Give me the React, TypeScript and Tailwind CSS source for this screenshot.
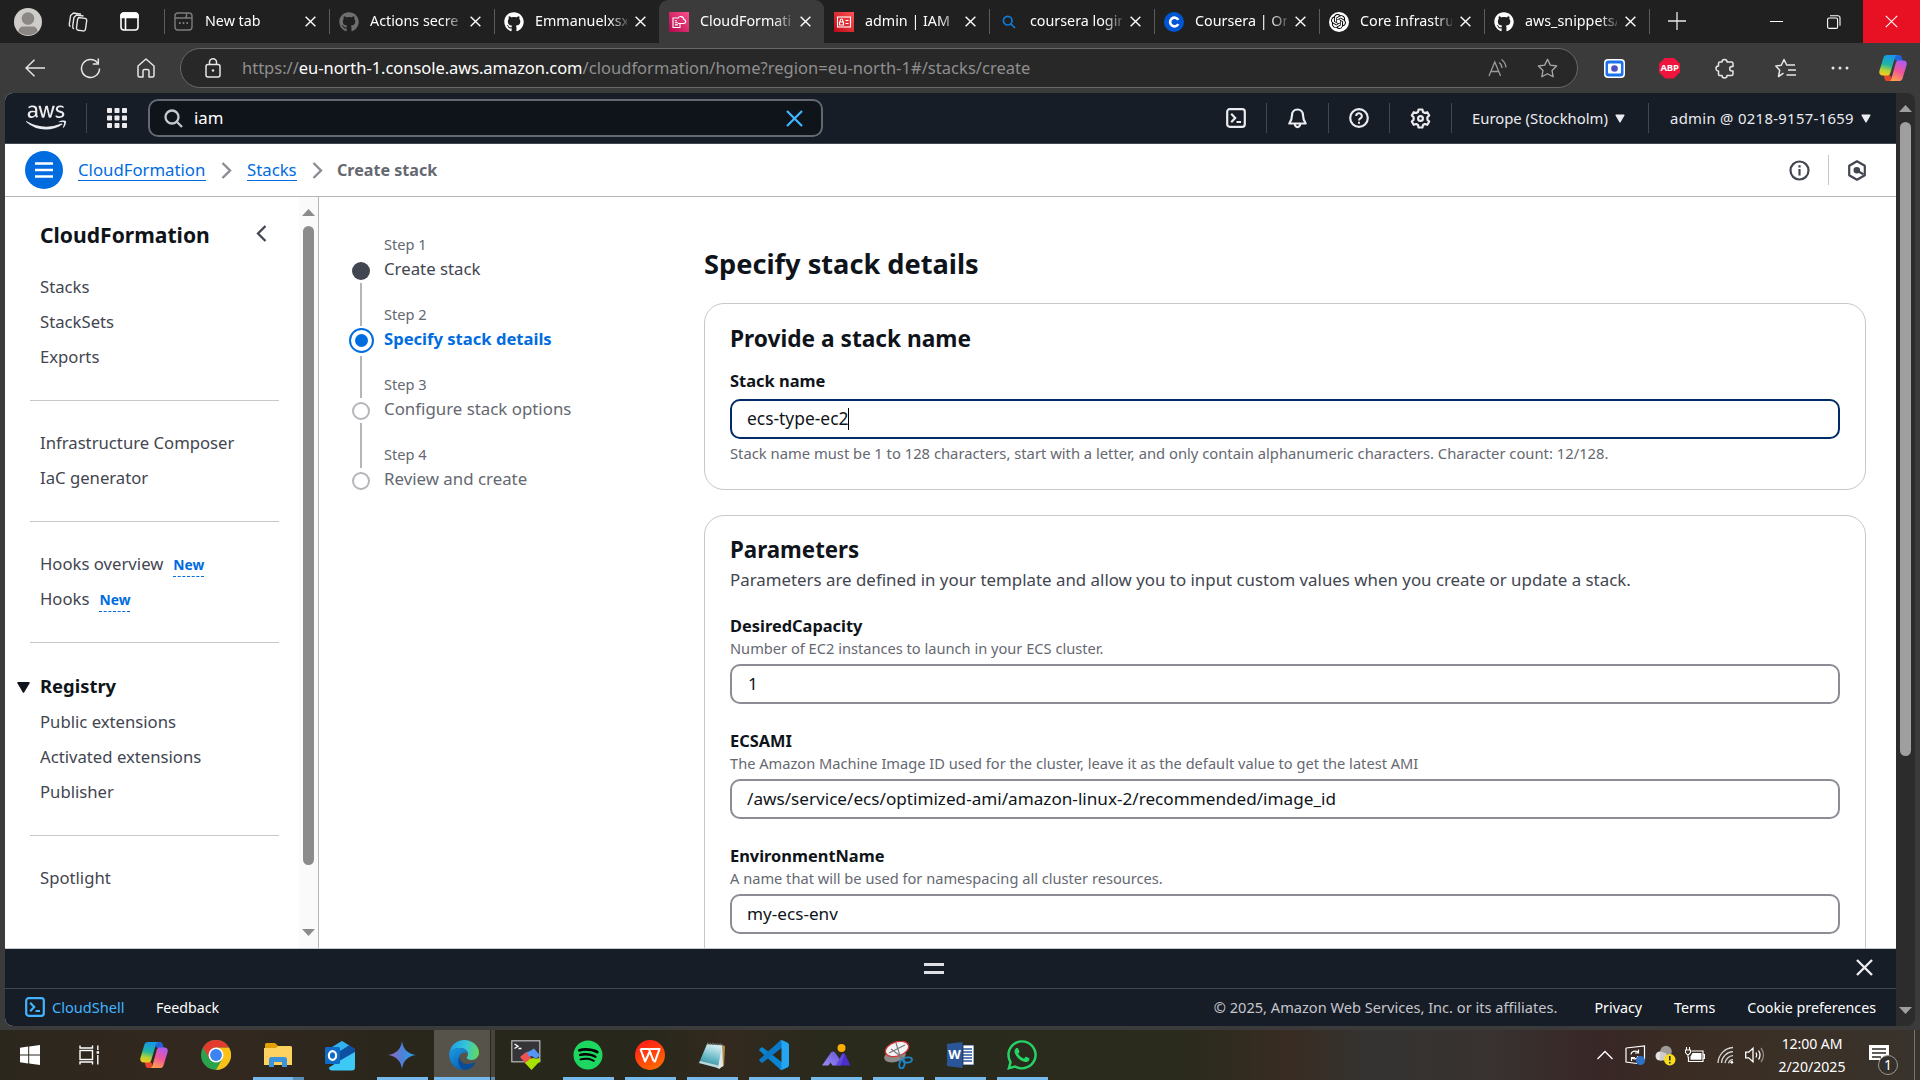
import React from 'react';
import { FaGithub, FaAws, FaSpotify, FaWhatsapp } from 'react-icons/fa';
import { SiOpenai } from 'react-icons/si';

type Kids = { children?: React.ReactNode; className?: string };

/* ---------- browser chrome icons ---------- */

const X = ({ size, w = 1.4, className = '' }: { size: number; w?: number; className?: string }) => (
  <svg width={size} height={size} viewBox="0 0 12 12" className={className} fill="none" stroke="currentColor" strokeWidth={w}>
    <path d="M.7.7l10.6 10.6M11.3.7L.7 11.3" />
  </svg>
);

const Avatar = () => (
  <svg width="28" height="28" viewBox="0 0 28 28">
    <circle cx="14" cy="14" r="14" fill="#cfcdca" />
    <circle cx="14" cy="10.5" r="6.3" fill="#8b8784" />
    <path d="M4.5 23.5c0-4 3-5 5-5h9c2 0 5 1 5 5a14 14 0 0 1-19 0z" fill="#8b8784" />
  </svg>
);

const Workspaces = () => (
  <svg width="21" height="22" viewBox="0 0 21 22" fill="none" stroke="#e6e6e6" strokeWidth="1.4" strokeLinejoin="round">
    <path d="M11.5 6.500l6.500.9a2 2 0 0 1 1.700 2.300l-1.200 8.500a2 2 0 0 1-2.300 1.700l-5-.7a2 2 0 0 1-1.700-2.300l1.100-8.500z" />
    <path d="M7 17.800c-1-.4-1.500-1.200-1.300-2.400L6.900 6.500 9.500 4l7 1" />
    <path d="M3.500 15.500c-1-.4-1.400-1.200-1.200-2.400l1.300-8.600L6.500 2l7.500 1.200" />
  </svg>
);

const TabActions = () => (
  <svg width="19" height="19" viewBox="0 0 19 19" fill="none" stroke="#fff" strokeWidth="1.6">
    <rect x="1" y="1" width="17" height="17" rx="3" />
    <path d="M1 4a3 3 0 0 1 3-3h11a3 3 0 0 1 3 3v1.500H1z" fill="#fff" />
    <path d="M5.500 5v13" />
  </svg>
);

const NewTabIcon = () => (
  <svg width="19" height="19" viewBox="0 0 19 19" fill="none" stroke="#7c7c7c" strokeWidth="1.4">
    <rect x="1" y="1" width="17" height="17" rx="3" />
    <path d="M1 6h10l1.500-1.500V1M11 6h7" />
    <path d="M5 11h1.600M8.700 11h1.600M12.400 11H14" strokeWidth="1.8" />
  </svg>
);

const CfnFav = () => (
  <svg width="20" height="20" viewBox="0 0 20 20" fill="none" stroke="#fff" strokeWidth="1.1">
    <defs>
      <linearGradient id="cfn" x1="0" y1="1" x2="1" y2="0">
        <stop stopColor="#b0084d" />
        <stop offset="1" stopColor="#ff4f8b" />
      </linearGradient>
    </defs>
    <rect width="20" height="20" fill="url(#cfn)" stroke="none" />
    <path d="M8.500 6H4v9.500h7v-3.500M5.800 8.700h2.200M5.800 10.700h3.200M5.800 12.900h3.200" />
    <path d="M9 11.500h5.500a2 2 0 0 0 .3-4 3.200 3.200 0 0 0-6.200-.8" />
  </svg>
);

const IamFav = () => (
  <svg width="20" height="20" viewBox="0 0 20 20" fill="none" stroke="#fff" strokeWidth="1.1">
    <defs>
      <linearGradient id="iam" x1="0" y1="1" x2="1" y2="0">
        <stop stopColor="#bd0816" />
        <stop offset="1" stopColor="#ff5252" />
      </linearGradient>
    </defs>
    <rect width="20" height="20" fill="url(#iam)" stroke="none" />
    <rect x="3.500" y="5" width="13" height="10" />
    <path d="M5.500 10h4v3h-4zM6.300 10V8.200a1.200 1.200 0 0 1 2.400 0V10M11.500 8.500h3M11.500 11.500h3" />
  </svg>
);

const BlueSearch = () => (
  <svg width="20" height="20" viewBox="0 0 20 20" fill="none" stroke="#0f7ad8" strokeWidth="1.7">
    <circle cx="8.700" cy="8.700" r="4.300" />
    <path d="M11.800 11.800l4.200 4.200" />
  </svg>
);

const CourseraFav = () => (
  <span className="flex size-5 items-center justify-center rounded-full bg-[#0056d2]">
    <svg width="12" height="12" viewBox="0 0 12 12" fill="none" stroke="#fff" strokeWidth="2.6">
      <path d="M10.300 3.800A4.400 4.400 0 1 0 10.300 8.200" />
    </svg>
  </span>
);

const OpenAiFav = () => (
  <span className="flex size-5 items-center justify-center rounded-full bg-white text-black">
    <SiOpenai size={15} />
  </span>
);

type TabProps = { icon: React.ReactNode; label: string; active?: boolean; line?: boolean };

const Tab = ({ icon, label, active, line = true }: TabProps) => (
  <div className={`flex h-[43px] w-[165px] shrink-0 items-center ${active ? 'rounded-t-[9px] bg-[#3b3b3b]' : ''}`}>
    <span className={`-mt-px h-[25px] w-px ${line ? 'bg-[#5c5c5c]' : ''}`} />
    <span className="ml-2 flex w-[21px] justify-center">{icon}</span>
    <span className="ml-[11px] w-[92px] whitespace-nowrap pb-[2px] text-[14.3px] text-white [mask-image:linear-gradient(to_right,black_74px,transparent_97px)]">
      {label}
    </span>
    <X size={11} w={1.5} className="ml-[8px] text-white" />
  </div>
);

const TabBar = () => (
  <div className="flex h-[43px] bg-[#202020]">
    <div className="flex w-[164px] shrink-0 items-center pl-[14px]">
      <Avatar />
      <span className="ml-[25px]">
        <Workspaces />
      </span>
      <span className="ml-[32px]">
        <TabActions />
      </span>
    </div>
    <Tab icon={<NewTabIcon />} label="New tab" />
    <Tab icon={<FaGithub size={20} className="text-[#6f6f6f]" />} label="Actions secre" />
    <Tab icon={<FaGithub size={20} className="text-white" />} label="Emmanuelxsx" />
    <Tab icon={<CfnFav />} label="CloudFormati" active line={false} />
    <Tab icon={<IamFav />} label="admin | IAM |" line={false} />
    <Tab icon={<BlueSearch />} label="coursera login" />
    <Tab icon={<CourseraFav />} label="Coursera | On" />
    <Tab icon={<OpenAiFav />} label="Core Infrastru" />
    <Tab icon={<FaGithub size={20} className="text-white" />} label="aws_snippets/" />
    <div className="flex w-[99px] items-center">
      <span className="-mt-px h-[25px] w-px bg-[#5c5c5c]" />
      <svg width="18" height="18" viewBox="0 0 18 18" className="-mt-px ml-[18px]" stroke="#e8e8e8" strokeWidth="1.3">
        <path d="M9 0v18M0 9h18" />
      </svg>
    </div>
    <div className="flex w-[57px] items-center justify-center">
      <span className="h-px w-[13px] bg-white" />
    </div>
    <div className="flex w-[58px] items-center justify-center">
      <svg width="14" height="14" viewBox="0 0 14 14" fill="none" stroke="#fff" strokeWidth="1.1">
        <rect x=".6" y="3" width="10" height="10.400" rx="1.500" />
        <path d="M3 .8h8a2 2 0 0 1 2 2v8" />
      </svg>
    </div>
    <div className="flex flex-1 items-center justify-center bg-[#e81123]">
      <X size={13} w={1} className="text-white" />
    </div>
  </div>
);

const Copilot = ({ id, size }: { id: string; size: number }) => (
  <svg width={size} height={size} viewBox="0 0 30 30">
    <defs>
      <linearGradient id={id + 'a'} x1=".4" y1="0" x2=".2" y2="1">
        <stop stopColor="#1797e8" />
        <stop offset=".45" stopColor="#22b5a2" />
        <stop offset=".75" stopColor="#b7d334" />
        <stop offset="1" stopColor="#ffc81e" />
      </linearGradient>
      <linearGradient id={id + 'b'} x1=".7" y1="0" x2=".3" y2="1">
        <stop stopColor="#b05af0" />
        <stop offset=".5" stopColor="#f0569a" />
        <stop offset="1" stopColor="#ffa04a" />
      </linearGradient>
    </defs>
    <path d="M17 1h4.500c1.500 0 2.300 1 2.700 2.300l1.300 4.200h-5.500c-2 0-2.800-1-3.300-2.800z" fill="#2463d8" />
    <path d="M13 29H8.800c-1.500 0-2.400-1-2.800-2.300L5 22.500h5c2 0 2.800 1 3.200 2.800z" fill="#e8452f" />
    <path d="M8.500 1H20c-1.500 0-2.300 1-2.800 2.500L12 20.500c-.5 1.500-1.500 2.500-3 2.500H4c-3 0-4.300-2-3.500-5L4.700 4C5.300 2 6.500 1 8.500 1z" fill={`url(#${id}a)`} />
    <path d="M21.500 29H10.500c1.500 0 2.300-1 2.800-2.500L18 9.500C18.500 8 19.500 7 21 7h5c3 0 4.300 2 3.500 5l-4.200 14c-.6 2-1.800 3-3.800 3z" fill={`url(#${id}b)`} />
  </svg>
);

const Cell = ({ children, className = '' }: Kids) => (
  <span className={`flex shrink-0 items-center justify-center ${className}`}>{children}</span>
);

const Toolbar = () => (
  <div className="flex h-[50px] items-center bg-[#3b3b3b] text-[#e6e6e6]">
    <Cell className="ml-[7px] w-[55px]">
      <svg width="20" height="18" viewBox="0 0 20 18" fill="none" stroke="currentColor" strokeWidth="1.5">
        <path d="M20 9H1M9.500.8L1 9l8.500 8.200" />
      </svg>
    </Cell>
    <Cell className="w-[57px]">
      <svg width="21" height="21" viewBox="0 0 21 21" fill="none" stroke="currentColor" strokeWidth="1.5">
        <path d="M17.800 5.200A9 9 0 1 0 19.500 10.500" />
        <path d="M18.300.5V6h-5.500" />
      </svg>
    </Cell>
    <Cell className="w-[54px]">
      <svg width="18" height="20" viewBox="0 0 18 20" fill="none" stroke="currentColor" strokeWidth="1.5" strokeLinejoin="round">
        <path d="M1 8l8-7 8 7v9.500a1.500 1.500 0 0 1-1.500 1.500H12v-6a1.500 1.500 0 0 0-1.500-1.500h-3A1.500 1.500 0 0 0 6 13v6H2.500A1.500 1.500 0 0 1 1 17.500z" />
      </svg>
    </Cell>
    <div className="ml-[7px] flex h-10 w-[1398px] shrink-0 items-center rounded-full border border-[#686868] bg-[#282828]">
      <svg width="16" height="20" viewBox="0 0 16 20" fill="none" stroke="#e6e6e6" strokeWidth="1.5" className="ml-[24px]">
        <rect x="1" y="6.500" width="14" height="12.500" rx="2" />
        <path d="M4.500 6.500V4.300a3.500 3.500 0 0 1 7 0v2.200" />
        <circle cx="8" cy="12.500" r="1.200" fill="#e6e6e6" stroke="none" />
      </svg>
      <span className="ml-[21px] text-[16.5px] whitespace-nowrap text-[#8f8f8f]">
        https://<span className="tracking-[-0.05px] text-white">eu-north-1.console.aws.amazon.com</span>
        <span className="tracking-[0.04px]">/cloudformation/home?region=eu-north-1#/stacks/create</span>
      </span>
      <span className="flex-1" />
      <svg width="20" height="18" viewBox="0 0 20 18" fill="none" stroke="#9a9a9a" strokeWidth="1.3">
        <path d="M1 17L6.800 3l5.800 14M3 12.500h7.700M11 3.500a7 7 0 0 1 3 5.500M13.500.5a11 11 0 0 1 4.500 8" />
      </svg>
      <svg width="21" height="20" viewBox="0 0 24 23" fill="none" stroke="#a8a8a8" strokeWidth="1.5" strokeLinejoin="round" className="mr-[19px] ml-[29px]">
        <path d="M12 1.500l3.200 6.700 7.300 1-5.300 5.100 1.300 7.300-6.500-3.500-6.500 3.500 1.300-7.300L1.500 9.200l7.300-1z" />
      </svg>
    </div>
    <Cell className="ml-[9px] w-[55px]">
      <svg width="21" height="19" viewBox="0 0 21 19">
        <rect width="21" height="19" rx="4" fill="#fff" />
        <rect x="1.500" y="1.500" width="18" height="16" rx="3" fill="#1a73e8" />
        <rect x="4" y="4.500" width="13" height="10" rx="1" fill="#fff" />
        <circle cx="10.500" cy="9.500" r="3.300" fill="#4a4fc4" />
      </svg>
    </Cell>
    <Cell className="w-[55px]">
      <span className="flex size-[21px] items-center justify-center bg-[#f0143c] text-[9.5px] leading-none font-bold tracking-[-0.2px] text-white [clip-path:polygon(30%_0,70%_0,100%_30%,100%_70%,70%_100%,30%_100%,0_70%,0_30%)]">
        ABP
      </span>
    </Cell>
    <Cell className="w-[55px]">
      <svg width="20" height="21" viewBox="0 0 20 21" fill="none" stroke="currentColor" strokeWidth="1.5" strokeLinejoin="round">
        <path d="M7 4a2.500 2.500 0 0 1 5 0h4.500a1.500 1.500 0 0 1 1.500 1.500V8.500h-1a2.300 2.300 0 0 0 0 4.600h1v3a1.500 1.500 0 0 1-1.500 1.500H12a2.500 2.500 0 0 1-5 0H5A1.500 1.500 0 0 1 3.500 16v-3a2.500 2.500 0 0 1 0-5V5.500A1.500 1.500 0 0 1 5 4z" />
      </svg>
    </Cell>
    <span className="ml-[3px] h-5 w-px bg-[#6b6b6b]" />
    <Cell className="w-[60px]">
      <svg width="21" height="20" viewBox="0 0 21 20" fill="none" stroke="currentColor" strokeWidth="1.5" strokeLinejoin="round">
        <path d="M8.500 15.200L3.500 18.500l1.200-6.300L.8 8.100l5.500-.8L9 1.500l2.700 5.500H20M13 12h8M11.500 17H21" />
      </svg>
    </Cell>
    <Cell className="w-[50px]">
      <svg width="18" height="4" viewBox="0 0 18 4" fill="currentColor">
        <circle cx="2" cy="2" r="1.500" />
        <circle cx="9" cy="2" r="1.500" />
        <circle cx="16" cy="2" r="1.500" />
      </svg>
    </Cell>
    <Cell className="w-[56px]">
      <Copilot id="cpt" size={28} />
    </Cell>
  </div>
);

/* ---------- AWS console ---------- */

const Triangle = ({ className = '' }: { className?: string }) => (
  <svg width="10" height="9" viewBox="0 0 11 10" className={className} fill="currentColor" stroke="currentColor" strokeLinejoin="round" strokeWidth="1.500">
    <path d="M1.200 1.200h8.600L5.500 8.700z" />
  </svg>
);

const ShellIcon = () => (
  <svg width="20" height="20" viewBox="0 0 20 20" fill="none" stroke="currentColor" strokeWidth="2.2">
    <rect x="1.200" y="1.200" width="17.600" height="17.600" rx="2.500" />
    <path d="M5.200 5.800L9.200 10l-4 4.200M10.500 14h4.500" />
  </svg>
);

const Sep = () => <span className="h-[30px] w-px bg-[#424650]" />;

const Header = () => (
  <div className="flex h-[51px] items-center border-b border-[#424650] bg-[#161d26] text-[#ebebf0]">
    <FaAws className="mb-px ml-[21px] h-[39px] w-[40px] shrink-0" />
    <span className="ml-[20px] h-[30px] w-px bg-[#424650]" />
    <svg width="20" height="20" viewBox="0 0 20 20" className="ml-[20px] shrink-0" fill="currentColor">
      {[0, 7.5, 15].map((y) => [0, 7.5, 15].map((x) => <rect key={`${x}-${y}`} x={x} y={y} width="5" height="5" rx=".8" />))}
    </svg>
    <div className="ml-[21px] flex h-[38px] w-[675px] shrink-0 items-center rounded-[10px] border-2 border-[#656871] bg-[#0f141a]">
      <svg width="19" height="19" viewBox="0 0 19 19" className="ml-[14px] shrink-0" fill="none" stroke="#c6c6cd" strokeWidth="2.3">
        <circle cx="8" cy="8" r="6.500" />
        <path d="M12.500 12.500l5.500 5.500" />
      </svg>
      <span className="ml-[11px] flex-1 text-[16.8px] text-white">iam</span>
      <X size={17} w={1.6} className="mr-[18px] text-[#42b4ff]" />
    </div>
    <Cell className="ml-[382px] w-[61px]">
      <ShellIcon />
    </Cell>
    <Sep />
    <Cell className="w-[60px]">
      <svg width="19" height="21" viewBox="0 0 19 21" fill="none" stroke="currentColor" strokeWidth="2.2" strokeLinejoin="round">
        <path d="M9.500 1.500c-3.500 0-5.500 2.500-5.500 5.700 0 4.300-1 5.800-2.700 8.300h16.400C16 13 15 11.500 15 7.200c0-3.200-2-5.700-5.500-5.700zM6.800 15.700a2.700 3.500 0 0 0 5.400 0" />
      </svg>
    </Cell>
    <span className="ml-px h-[30px] w-px bg-[#424650]" />
    <Cell className="w-[60px]">
      <svg width="20" height="20" viewBox="0 0 20 20" fill="none" stroke="currentColor" strokeWidth="2.2">
        <circle cx="10" cy="10" r="8.800" />
        <path d="M7.200 8a2.800 2.800 0 1 1 4 2.500c-.8.400-1.200.8-1.200 2M10 13.800v2" strokeWidth="2" />
      </svg>
    </Cell>
    <Sep />
    <Cell className="w-[61px]">
      <svg width="21" height="21" viewBox="0 0 21 21" fill="none" stroke="currentColor" strokeWidth="2.2" strokeLinejoin="round">
        <path d="M8.600 1.500h3.800l.6 2.500 1.800 1 2.500-.8 1.900 3.300-1.800 1.800v2.400l1.800 1.800-1.900 3.300-2.500-.8-1.800 1-.6 2.500H8.600L8 17l-1.800-1-2.500.8-1.900-3.300 1.800-1.800V9.300L1.800 7.500l1.900-3.300 2.500.8L8 4z" />
        <circle cx="10.500" cy="10.500" r="2.400" />
      </svg>
    </Cell>
    <Sep />
    <span className="ml-[20px] w-[136px] text-[14.85px] whitespace-nowrap">Europe (Stockholm)</span>
    <Triangle className="ml-[7px]" />
    <span className="ml-[23px] h-[30px] w-px bg-[#424650]" />
    <span className="ml-[21px] w-[184px] text-[14.85px] tracking-[0.32px] whitespace-nowrap">admin @ 0218-9157-1659</span>
    <Triangle className="ml-[7px]" />
  </div>
);

const Chevron = () => (
  <svg width="11" height="17" viewBox="0 0 11 17" fill="none" stroke="#8c8c94" strokeWidth="2.4">
    <path d="M1.500 1l7.500 7.500L1.500 16" />
  </svg>
);

const Breadcrumbs = () => (
  <div className="flex h-[53px] shrink-0 items-center border-b border-[#b4b4bb] bg-white text-[16.75px] whitespace-nowrap">
    <span className="ml-[20px] flex size-[38px] shrink-0 items-center justify-center rounded-full bg-[#006ce0]">
      <svg width="18" height="16" viewBox="0 0 18 16" stroke="#fff" strokeWidth="2.3">
        <path d="M0 1.500h18M0 8h18M0 14.500h18" />
      </svg>
    </span>
    <span className="ml-[15px] h-[22px] w-[128px] border-b border-[#006ce0] leading-[22px] text-[#006ce0]">CloudFormation</span>
    <span className="mx-[15px] flex w-[11px]">
      <Chevron />
    </span>
    <span className="h-[22px] w-[50px] border-b border-[#006ce0] leading-[22px] text-[#006ce0]">Stacks</span>
    <span className="mr-[14px] ml-[15px] flex w-[11px]">
      <Chevron />
    </span>
    <span className="flex-1 text-[16.1px] font-bold text-[#656871]">Create stack</span>
    <svg width="21" height="21" viewBox="0 0 21 21" fill="none" stroke="#424650" strokeWidth="2.2">
      <circle cx="10.500" cy="10.500" r="9" />
      <path d="M10.500 9v6.500M10.500 5.300v2.200" />
    </svg>
    <span className="mx-[18px] h-[30px] w-px bg-[#c6c6cd]" />
    <svg width="20" height="21" viewBox="0 0 20 21" fill="none" stroke="#424650" strokeWidth="2.2" strokeLinejoin="round" className="mr-[29px]">
      <path d="M10 1.300l7.800 4.500v9.400L10 19.700l-7.800-4.500V5.800z" />
      <circle cx="9.800" cy="10.300" r="2.200" fill="#424650" />
      <path d="M10.500 11l6 3.200" />
    </svg>
  </div>
);

const Item = ({ children, className = '' }: Kids) => (
  <div className={`flex h-[35px] items-center pb-[3px] text-[16.7px] whitespace-nowrap text-[#424650] ${className}`}>{children}</div>
);

const Rule = () => <div className="mt-[24px] mb-[26px] -ml-[10px] h-px w-[249px] bg-[#c6c6cd]" />;

const NewBadge = () => (
  <span className="mt-[3px] ml-[10px] h-[22px] border-b border-dashed border-[#006ce0] text-[13.8px] leading-[20px] font-bold text-[#006ce0]">New</span>
);

const Arrow = ({ down, fill }: { down?: boolean; fill: string }) => (
  <svg width="13" height="7" viewBox="0 0 13 7" fill={fill} className="shrink-0">
    <path d={down ? 'M0 0h13L6.500 7z' : 'M0 7h13L6.500 0z'} />
  </svg>
);

const Sidebar = () => (
  <div className="flex w-[314px] shrink-0 border-r border-[#b4b4bb]">
    <div className="w-[294px] pl-[35px]">
      <div className="mt-[18px] flex h-[40px] items-center text-[21.1px] font-bold text-[#0f141a]">
        <span className="w-[171px]">CloudFormation</span>
        <svg width="11" height="17" viewBox="0 0 11 17" fill="none" stroke="#424650" strokeWidth="2.3" className="mb-[3px] ml-[45px]">
          <path d="M9.500 1L2 8.500 9.500 16" />
        </svg>
      </div>
      <div className="h-[16px]" />
      <Item>Stacks</Item>
      <Item>StackSets</Item>
      <Item>Exports</Item>
      <Rule />
      <Item>Infrastructure Composer</Item>
      <Item>IaC generator</Item>
      <Rule />
      <Item>
        Hooks overview
        <NewBadge />
      </Item>
      <Item>
        Hooks
        <NewBadge />
      </Item>
      <Rule />
      <div className="-ml-[23px] flex h-[37px] items-center pb-[3px] text-[18.4px] font-bold text-[#0f141a]">
        <svg width="13" height="11" viewBox="0 0 13 11" fill="currentColor" className="mt-[3px] mr-[10px]">
          <path d="M1 0h11q1 .3.600 1.300L7.300 10.300q-.8 1-1.600 0L.4 1.300Q0 .3 1 0z" />
        </svg>
        Registry
      </div>
      <Item>Public extensions</Item>
      <Item>Activated extensions</Item>
      <Item>Publisher</Item>
      <Rule />
      <Item>Spotlight</Item>
    </div>
    <div className="flex flex-1 flex-col items-center bg-[#fafafa] pt-[12px]">
      <Arrow fill="#8b8b8b" />
      <div className="mt-[10px] h-[639px] w-[11px] rounded-full bg-[#8b8b8b]" />
      <div className="flex-1" />
      <span className="mb-[12px]">
        <Arrow down fill="#8b8b8b" />
      </span>
    </div>
  </div>
);

type StepProps = { n: number; label: string; state: 'done' | 'active' | 'todo'; line?: string };

const Step = ({ n, label, state, line }: StepProps) => (
  <div className="flex h-[70px]">
    <div className="flex w-[26px] flex-col items-center">
      <div className="flex h-[26px] items-center">
        {state === 'done' && <span className="size-[18px] rounded-full bg-[#424650]" />}
        {state === 'active' && (
          <span className="flex size-[25px] items-center justify-center rounded-full border-[2.5px] border-[#006ce0]">
            <span className="size-[13px] rounded-full bg-[#006ce0]" />
          </span>
        )}
        {state === 'todo' && <span className="size-[18px] rounded-full border-[2.5px] border-[#b4b4bb]" />}
      </div>
      {line && <span className={`w-[2px] bg-[#b4b4bb] ${line}`} />}
    </div>
    <div className="-mt-[25px] ml-[10px]">
      <div className="text-[14.6px] leading-[22px] text-[#656871]">Step {n}</div>
      <div
        className={`pt-px leading-[26px] whitespace-nowrap ${
          state === 'done' ? 'text-[16.8px] text-[#424650]' : state === 'active' ? 'text-[16.6px] font-bold text-[#006ce0]' : 'text-[16.85px] text-[#656871]'
        }`}
      >
        {label}
      </div>
    </div>
  </div>
);

const Field = ({ label, help, value, one }: { label: string; help: string; value: string; one?: boolean }) => (
  <div className="h-[115px]">
    <div className="text-[16.4px] leading-[25px] font-bold text-[#0f141a]">{label}</div>
    <div className="text-[14.63px] leading-[20px] text-[#656871]">{help}</div>
    <div className={`mt-[6px] flex h-10 items-center rounded-[10px] border-[2.5px] border-[#8c8c94] pb-px text-[17.15px] text-[#0f141a] ${one ? 'pl-[16px]' : 'pl-[15px]'}`}>{value}</div>
  </div>
);

const Main = () => (
  <div className="flex flex-1 overflow-hidden bg-white">
    <div className="w-[385px] shrink-0 pt-[61px] pl-[29px]">
      <Step n={1} label="Create stack" state="done" line="-mt-px h-[43px]" />
      <Step n={2} label="Specify stack details" state="active" line="mt-[2px] h-[43px]" />
      <Step n={3} label="Configure stack options" state="todo" line="-mt-px h-[46px]" />
      <Step n={4} label="Review and create" state="todo" />
    </div>
    <div className="w-[1162px] shrink-0">
      <h1 className="mt-[47px] mb-[19px] text-[27.2px] leading-[40px] font-bold text-[#0f141a]">Specify stack details</h1>
      <section className="h-[187px] rounded-[20px] border border-[#c6c6cd] px-[25px]">
        <h2 className="mt-[19px] text-[22.7px] leading-[32px] font-bold text-[#0f141a]">Provide a stack name</h2>
        <div className="mt-[13px] text-[16.45px] leading-[25px] font-bold text-[#0f141a]">Stack name</div>
        <div className="mt-[6px] flex h-10 items-center rounded-[10px] border-[2.5px] border-[#002b66] pl-[15px] text-[#0f141a]">
          <span className="pb-px text-[17.4px]">ecs-type-ec2</span>
          <span className="h-[22px] w-px bg-black" />
        </div>
        <div className="mt-[4px] text-[14.77px] leading-[20px] whitespace-nowrap text-[#656871]">
          Stack name must be 1 to 128 characters, start with a letter, and only contain alphanumeric characters. Character count: 12/128.
        </div>
      </section>
      <section className="mt-[25px] h-[500px] rounded-[20px] border border-[#c6c6cd] px-[25px]">
        <h2 className="mt-[18px] text-[22.3px] leading-[32px] font-bold text-[#0f141a]">Parameters</h2>
        <div className="mt-px mb-[20px] text-[16.86px] leading-[26px] whitespace-nowrap text-[#424650]">
          Parameters are defined in your template and allow you to input custom values when you create or update a stack.
        </div>
        <Field label="DesiredCapacity" help="Number of EC2 instances to launch in your ECS cluster." value="1" one />
        <Field
          label="ECSAMI"
          help="The Amazon Machine Image ID used for the cluster, leave it as the default value to get the latest AMI"
          value="/aws/service/ecs/optimized-ami/amazon-linux-2/recommended/image_id"
        />
        <Field label="EnvironmentName" help="A name that will be used for namespacing all cluster resources." value="my-ecs-env" />
      </section>
    </div>
  </div>
);

const Footer = () => (
  <div className="shrink-0 bg-[#161d26] text-[14.6px] whitespace-nowrap text-[#ebebf0]">
    <div className="flex h-[41px] items-center border-t border-b border-t-[#c6c6cd] border-b-[#424650]">
      <div className="ml-[919px] h-[11px] w-[20px] border-y-[3px] border-[#dedee3]" />
      <span className="flex-1" />
      <X size={17} w={1.7} className="mr-[23px] mb-[2px]" />
    </div>
    <div className="flex h-[37px] items-center">
      <span className="mb-px ml-[20px] text-[#42b4ff]">
        <ShellIcon />
      </span>
      <span className="ml-[7px] w-[74px] text-[#42b4ff]">CloudShell</span>
      <span className="ml-[30px] text-[14.2px] text-white">Feedback</span>
      <span className="flex-1" />
      <span className="text-[#c6c6cd]">© 2025, Amazon Web Services, Inc. or its affiliates.</span>
      <span className="ml-[37px] text-[14.3px] text-white">Privacy</span>
      <span className="ml-[32px] text-[14.3px] text-white">Terms</span>
      <span className="mr-[20px] ml-[32px] text-[14.25px] text-white">Cookie preferences</span>
    </div>
  </div>
);

/* ---------- taskbar ---------- */

const Windows = () => (
  <svg width="20" height="20" viewBox="0 0 20 20" fill="#fff">
    <path d="M0 2.800l8.200-1.200v8H0zM9.200 1.400L20 0v9.600H9.200zM0 10.500h8.200v8L0 17.300zM9.200 10.500H20V20L9.200 18.600z" />
  </svg>
);

const TaskView = () => (
  <svg width="21" height="20" viewBox="0 0 21 20" fill="none" stroke="#fff" strokeWidth="1.4">
    <rect x="1" y="5.500" width="12.500" height="9" />
    <path d="M1 .5V3h12.500V.5M1 19.500V17h12.500v2.500M18.800 .5v4.500M18.800 10v9.500" />
    <path d="M17.600 6.200h2.500v2.500h-2.500z" fill="#fff" stroke="none" />
  </svg>
);

const Chrome = () => (
  <svg width="30" height="30" viewBox="0 0 48 48">
    <circle cx="24" cy="24" r="24" fill="#2ba24c" />
    <path d="M24 12h20.800A24 24 0 0 1 24 48l10.400-18z" fill="#fbc116" />
    <path d="M3.200 12A24 24 0 0 1 44.800 12H24l-10.400 18z" fill="#e33b2e" />
    <circle cx="24" cy="24" r="12" fill="#fff" />
    <circle cx="24" cy="24" r="9.500" fill="#3b82f3" />
  </svg>
);

const Explorer = () => (
  <svg width="28" height="24" viewBox="0 0 28 24">
    <path d="M1 1.500Q1 0 2.500 0H11l3 3v5H1z" fill="#e2a100" />
    <path d="M0 5h12l2-2h12.500Q28 3 28 4.500V22H0z" fill="#fdd261" />
    <path d="M5 24v-7.500Q5 14 7.500 14h13q2.500 0 2.500 2.500V24h-5v-5H10v5z" fill="#3c94dc" />
  </svg>
);

const Outlook = () => (
  <svg width="30" height="31" viewBox="0 0 30 31">
    <path d="M4 9L17 1l13 8v14H4z" fill="#1b6fc8" />
    <path d="M4 9L17 1l7 4.500L9 15z" fill="#32b3ee" />
    <path d="M24 5.500L30 9v3L14 22 9 15z" fill="#0d4fa0" />
    <path d="M30 12v15.500q0 3-3 3H7q-3 0-3-3L16 20z" fill="#3cc9f5" />
    <rect y="7" width="15" height="17" rx="1.500" fill="#0f6cc4" />
    <ellipse cx="7.500" cy="15.500" rx="3.600" ry="4.300" fill="none" stroke="#fff" strokeWidth="2.2" />
  </svg>
);

const Gemini = () => (
  <svg width="28" height="28" viewBox="0 0 28 28">
    <defs>
      <linearGradient id="gem">
        <stop stopColor="#9a6cc0" />
        <stop offset=".5" stopColor="#4f7fd8" />
        <stop offset="1" stopColor="#23a6e8" />
      </linearGradient>
    </defs>
    <path d="M14 0C15 8 20 13 28 14 20 15 15 20 14 28 13 20 8 15 0 14 8 13 13 8 14 0z" fill="url(#gem)" />
  </svg>
);

const Edge = () => (
  <svg width="30" height="30" viewBox="0 0 30 30">
    <defs>
      <linearGradient id="edA" x1="0" y1=".4" x2="1" y2=".5">
        <stop stopColor="#1f9ee6" />
        <stop offset=".55" stopColor="#35c5d8" />
        <stop offset="1" stopColor="#64db5a" />
      </linearGradient>
      <linearGradient id="edB" x1="0" y1="0" x2=".6" y2="1">
        <stop stopColor="#1b9de2" />
        <stop offset="1" stopColor="#0b62b8" />
      </linearGradient>
    </defs>
    <path d="M.5 13C1.500 5 8 0 15 0c8.500 0 15 6 15 12.500 0 4.500-3.500 7.500-7.500 7.500-3 0-4.800-1-4.800-2.200 0-.8 1.300-1.300 1.300-3.800 0-3-3-6-7.500-6C6 8 2 10 .5 13z" fill="url(#edA)" />
    <path d="M.2 13C2 9.500 6 8 10.500 8c4 0 8 2 8.500 5.500-1.500-1.500-6-1.800-8 1.500-2.500 4.500 0 10.500 5 13v2C6 30.500-.3 23 .2 13z" fill="url(#edB)" />
    <path d="M10.500 16c-.5 5 4 8.500 9 8 3.500-.3 5-1.300 6-1.500.8-.2 1.200.5.700 1.200C23.500 27.500 20 30 15.500 30 9.500 28.500 8 20 10.500 16z" fill="#0c4c97" />
  </svg>
);

const Terminal = () => (
  <svg width="30" height="30" viewBox="0 0 30 30">
    <rect x=".8" y=".8" width="28" height="21" fill="#353539" stroke="#bdbdbd" strokeWidth="1.2" />
    <path d="M3.500 4l3.500 2.200-3.500 2.300M7.500 8.500h3" stroke="#fff" strokeWidth="1.3" fill="none" />
    <path d="M9 17l6-5 3.500 3 2.500 5-6 4z" fill="#ef5050" />
    <path d="M15.500 12l2.500-.5 5-3 3 3.500 3 3-4 4-4-3-3 .5z" fill="#5596f5" />
    <path d="M14 23l5-4 3.500-1 2.500 1 3-1 1.500 2.500-9 9.500z" fill="#a8e200" />
  </svg>
);

const Wps = () => (
  <svg width="30" height="30" viewBox="0 0 30 30">
    <defs>
      <linearGradient id="wps" x1=".2" y1="0" x2=".7" y2="1">
        <stop stopColor="#ff1a1a" />
        <stop offset="1" stopColor="#ff6a00" />
      </linearGradient>
    </defs>
    <circle cx="15" cy="15" r="15" fill="url(#wps)" />
    <path d="M5.500 9h8.500l4.500 12M5.500 9l4.500 12.500L15 11M15 9h9.500L20 21.500h-1.500" fill="none" stroke="#fff" strokeWidth="2.1" strokeLinejoin="round" />
  </svg>
);

const Notepad = () => (
  <svg width="28" height="27" viewBox="0 0 28 27">
    <defs>
      <linearGradient id="npd" x1=".6" y1="0" x2=".3" y2="1">
        <stop stopColor="#d8f1f4" />
        <stop offset=".6" stopColor="#5fb4c2" />
        <stop offset="1" stopColor="#327f90" />
      </linearGradient>
    </defs>
    <path d="M24 3l3 1-1 20-5 2z" fill="#b08d4a" />
    <path d="M24 2l1 22-4 3-3-2z" fill="#dfe7e8" />
    <path d="M9 2l15 1-4 23-19-5z" fill="url(#npd)" />
    <path d="M1 21l19 5 .6-2.500L2 19z" fill="#eef4f4" opacity=".7" />
    <path d="M9 1.500L24.500 2.500" stroke="#666" strokeWidth="2" strokeDasharray="1.500 1" />
  </svg>
);

const VsCode = () => (
  <svg width="30" height="30" viewBox="0 0 100 100">
    <path d="M72 99L2 36q-3-3 0-6l5-5q3-2 6 0l85 66z" fill="#0a84d0" />
    <path d="M72 1L2 64q-3 3 0 6l5 5q3 2 6 0L98 9z" fill="#0a78c4" />
    <path d="M70 98q5 3 10 0l16-8q4-2 4-6V16q0-4-4-6L80 2q-5-3-10 0l5 2v92z" fill="#25a5f0" />
  </svg>
);

const Mountains = () => (
  <svg width="29" height="22" viewBox="0 0 29 22">
    <defs>
      <linearGradient id="mtA" x1="0" y1="1" x2="1" y2="0">
        <stop stopColor="#9b8df0" />
        <stop offset="1" stopColor="#6a55dc" />
      </linearGradient>
    </defs>
    <path d="M28.500 21.500H14l6-11.500q1.500-2 3 0z" fill="#4b2fc9" />
    <path d="M0 21.500L9 8.500q2-2 4 0l5 7-3.500 6h-4l-2-3-2 3z" fill="url(#mtA)" />
    <path d="M13.500 21.500l7-11.500 2 1-4 10.500z" fill="#5f49dd" />
    <circle cx="19.500" cy="4" r="4" fill="#fcae04" />
  </svg>
);

const Snip = () => (
  <svg width="29" height="28" viewBox="0 0 29 28">
    <ellipse cx="11" cy="15" rx="11" ry="6" transform="rotate(-14 11 15)" fill="#8d8b88" />
    <ellipse cx="13" cy="8" rx="12" ry="7" transform="rotate(-18 13 8)" fill="#f3f3f5" stroke="#d53a3a" strokeWidth="1.3" />
    <path d="M12 2l5 16M5 12l16-8M7 8l12 9" stroke="#777" strokeWidth="1.1" />
    <ellipse cx="23.500" cy="19" rx="4.500" ry="2.600" transform="rotate(-8 23.500 19)" fill="none" stroke="#1d84c6" strokeWidth="1.8" />
    <ellipse cx="18" cy="23" rx="2.600" ry="4.300" transform="rotate(12 18 23)" fill="none" stroke="#1d84c6" strokeWidth="1.8" />
  </svg>
);

const Word = () => (
  <div className="flex items-center">
    <span className="flex h-[26px] w-[16px] items-center justify-center bg-[#2a5699] text-[13px] font-bold text-white [clip-path:polygon(0_8%,100%_0,100%_100%,0_92%)]">W</span>
    <svg width="11" height="20" viewBox="0 0 11 20">
      <rect width="11" height="20" fill="#fff" stroke="#2a5699" />
      <path d="M0 4h9M0 7h9M0 10h9M0 13h9M0 16h9" stroke="#2a5699" strokeWidth="1.5" />
    </svg>
  </div>
);

type SlotProps = { children: React.ReactNode; open?: boolean; group?: boolean };

const Slot = ({ children, open, group }: SlotProps) => (
  <div className="flex h-[50px] w-[62px] shrink-0 flex-col items-center">
    <div className="flex h-[47px] items-center pt-[3px]">{children}</div>
    {open && (
      <div className="flex h-[3px] w-[51px] justify-end bg-[#76b9ed]">{group && <span className="w-[11px] bg-[#5a8db4]" />}</div>
    )}
  </div>
);

const Taskbar = () => (
  <div className="mt-[4px] flex h-[50px] bg-[linear-gradient(90deg,#2c271d_0px,#33281f_210px,#29261b_420px,#27281b_640px,#33291f_730px,#29291c_820px,#2a2a1d_1180px,#392c23_1290px,#343331_1370px,#383230_1490px,#382726_1600px,#3a2c23_1680px,#3b3026_1780px,#38332c_1920px)] text-white">
    <Cell className="ml-[3px] w-[54px]">
      <Windows />
    </Cell>
    <Cell className="ml-[5px] w-[55px]">
      <TaskView />
    </Cell>
    <div className="w-[6px]" />
    <Slot>
      <Copilot id="cpb" size={28} />
    </Slot>
    <Slot>
      <Chrome />
    </Slot>
    <Slot open group>
      <Explorer />
    </Slot>
    <Slot>
      <Outlook />
    </Slot>
    <Slot open>
      <Gemini />
    </Slot>
    <div className="flex w-[62px] shrink-0">
      <div className="ml-px flex w-[56px] flex-col bg-[#55534a]">
        <div className="flex h-[47px] items-center justify-center pt-[3px] pl-[4px]">
          <Edge />
        </div>
        <div className="h-[3px] bg-[#76b9ed]" />
      </div>
      <div className="ml-px flex w-[4px] flex-col justify-end bg-[#46443c]">
        <div className="h-[3px] bg-[#5a8db4]" />
      </div>
    </div>
    <Slot>
      <Terminal />
    </Slot>
    <Slot open>
      <span className="relative flex">
        <span className="absolute inset-1 rounded-full bg-black" />
        <FaSpotify size={30} className="relative text-[#1ed760]" />
      </span>
    </Slot>
    <Slot open>
      <Wps />
    </Slot>
    <Slot open>
      <Notepad />
    </Slot>
    <Slot open>
      <VsCode />
    </Slot>
    <Slot open>
      <Mountains />
    </Slot>
    <Slot open>
      <Snip />
    </Slot>
    <Slot open>
      <Word />
    </Slot>
    <Slot open>
      <FaWhatsapp size={34} className="text-[#25d366]" />
    </Slot>
    <span className="flex-1" />
    <Cell className="w-[30px]">
      <svg width="16" height="10" viewBox="0 0 16 10" fill="none" stroke="#fff" strokeWidth="1.4">
        <path d="M.5 9L8 1.500 15.500 9" />
      </svg>
    </Cell>
    <Cell className="w-[30px]">
      <svg width="21" height="20" viewBox="0 0 21 20" fill="none" stroke="#fff" strokeWidth="1.2">
        <path d="M1 3l18.500-2v14M1 3v14l11 1.500M6 9.500c0-3 4-4.500 7-2.500M13.500 4.500V8h-3.500M13 11c0 3-3.500 3.500-6 2M6.500 16v-3.500H10" />
        <circle cx="15.500" cy="15.500" r="4.500" fill="#2d72c4" stroke="none" />
      </svg>
    </Cell>
    <Cell className="w-[30px]">
      <svg width="21" height="21" viewBox="0 0 21 21">
        <circle cx="11" cy="6.500" r="5.800" fill="#9d9996" />
        <circle cx="5" cy="11" r="4.500" fill="#e4e2e0" />
        <path d="M5 7l6 1 3 7.500H5z" fill="#cfccca" />
        <circle cx="14.800" cy="14.800" r="5.700" fill="#f9dc1c" />
        <path d="M14.800 11v4.600M14.800 17v1.600" stroke="#111" strokeWidth="1.4" />
      </svg>
    </Cell>
    <Cell className="w-[30px]">
      <svg width="20" height="16" viewBox="0 0 20 16" fill="none" stroke="#fff" strokeWidth="1.2">
        <path d="M6.500 4h11.500v10.500H3.500V10M18 7.500h1.500v4H18" />
        <path d="M7.500 6h9v6.700H5.500V9.500z" fill="#fff" stroke="none" />
        <path d="M1.500 0v3M4.500 0v3M.5 3h5v2.500L3.800 7.500H2.200L.5 5.500zM3 7v3.500" strokeWidth="1.1" />
      </svg>
    </Cell>
    <Cell className="w-[31px]">
      <svg width="17" height="18" viewBox="0 0 17 18" fill="none" stroke="#d8d8d8" strokeWidth="1.3">
        <path d="M1 17A16 16 0 0 1 16 1.500M4.500 17A12 12 0 0 1 16 5.700M8 17.200a8.500 8.500 0 0 1 8-7.500M11.500 17.200a5 5 0 0 1 4.500-3.500" />
        <circle cx="14.800" cy="16.300" r="1.400" fill="#fff" stroke="none" />
      </svg>
    </Cell>
    <Cell className="w-[28px]">
      <svg width="20" height="18" viewBox="0 0 20 18" fill="none" stroke="#fff" strokeWidth="1.3">
        <path d="M.7 6.200h3L8 2.200v13.600l-4.300-4h-3zM11 6.500q1.500 2.500 0 5M13.500 4.500q3 4.500 0 9" />
        <path d="M16 2q5 7 0 14" stroke="#8f8a86" />
      </svg>
    </Cell>
    <div className="ml-[3px] flex w-[80px] flex-col items-center pt-[2px] text-[14.1px] leading-[23px]">
      <span className="tracking-[-0.1px]">12:00 AM</span>
      <span>2/20/2025</span>
    </div>
    <div className="relative ml-[14px] w-[30px]">
      <svg width="20" height="20" viewBox="0 0 20 20" className="mt-[15px] ml-[3px]">
        <path d="M0 0h20v15h-7l-3 4v-4H0z" fill="#fff" />
        <path d="M3 4h14M3 8h14M3 12h9" stroke="#2e2822" strokeWidth="1.5" />
      </svg>
      <span className="absolute top-[25px] left-[12px] flex size-[20px] items-center justify-center rounded-full border border-[#9c9894] bg-[#34302c] text-[14px] leading-none">1</span>
    </div>
    <span className="mr-[5px] ml-[18px] w-px bg-[#77736e]" />
  </div>
);

export default function App() {
  return (
    <div className='h-[1080px] w-[1920px] overflow-hidden bg-[#3b3b3b] font-["Noto_Sans","Open_Sans",sans-serif]'>
      <TabBar />
      <Toolbar />
      <div className="mx-[5px] flex h-[933px] overflow-hidden rounded-[8px]">
        <div className="flex w-[1891px] shrink-0 flex-col bg-white">
          <Header />
          <Breadcrumbs />
          <div className="flex min-h-0 flex-1 overflow-hidden">
            <Sidebar />
            <Main />
          </div>
          <Footer />
        </div>
        <div className="flex flex-1 flex-col items-center bg-[#2c2c2c] pt-[12px]">
          <Arrow fill="#9f9f9f" />
          <div className="mt-[10px] h-[634px] w-[11px] rounded-full bg-[#9f9f9f]" />
          <div className="flex-1" />
          <span className="mb-[12px]">
            <Arrow down fill="#9f9f9f" />
          </span>
        </div>
      </div>
      <Taskbar />
    </div>
  );
}
